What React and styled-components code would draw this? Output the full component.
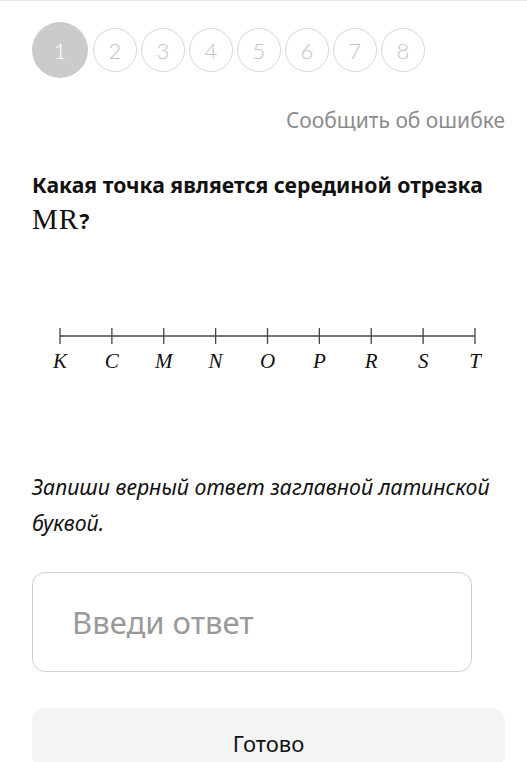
import styled, { createGlobalStyle } from "styled-components";

const GlobalStyle = createGlobalStyle`
	html, body {
		margin: 0;
		padding: 0;
		background: #ffffff;
	}

	body {
		font-family: "Noto Sans", "Open Sans", sans-serif;
		color: #111111;
	}
`;

const Page = styled.div`
	display: flex;
	flex-direction: column;
	width: 527px;
	min-height: 762px;
	box-sizing: border-box;
	border-top: 1px solid #e9e9e9;
	padding: 21px 22px 0 32px;
`;

const Steps = styled.div`
	display: flex;
	align-items: center;
	gap: 4px;
	height: 56px;
`;

const Step = styled.div`
	display: flex;
	align-items: center;
	justify-content: center;
	box-sizing: border-box;
	width: ${({ $active }) => ($active ? "56px" : "44px")};
	height: ${({ $active }) => ($active ? "56px" : "44px")};
	margin-right: ${({ $active }) => ($active ? "1px" : "0")};
	border-radius: 50%;
	border: ${({ $active }) => ($active ? "none" : "1.5px solid #d6d6d6")};
	background: ${({ $active }) => ($active ? "#cbcbcb" : "#ffffff")};
	color: ${({ $active }) => ($active ? "#ffffff" : "#c4c4c4")};
	font-family: "Lato", "Noto Sans", sans-serif;
	font-weight: 300;
	font-size: 22px;
`;

const ReportLink = styled.div`
	align-self: flex-end;
	margin-top: 27px;
	font-size: 21px;
	line-height: 30px;
	color: #8c8c8c;
`;

const Question = styled.h2`
	margin: 32px 0 0;
	font-size: 21.2px;
	font-weight: 700;
	line-height: 35px;
	color: #111111;
`;

const MathVar = styled.span`
	font-family: "Liberation Serif", "DejaVu Serif", serif;
	font-weight: 400;
	font-size: 29px;
	letter-spacing: 1px;
`;

const LineWrap = styled.div`
	display: flex;
	margin: 88px -22px 0 -32px;

	& > svg {
		flex-shrink: 0;
	}
`;

const Hint = styled.p`
	margin: 91px 0 0;
	font-size: 21.3px;
	font-style: italic;
	line-height: 36px;
	color: #111111;
`;

const AnswerField = styled.div`
	display: flex;
	align-items: center;
	box-sizing: border-box;
	width: 440px;
	height: 100px;
	margin-top: 31px;
	padding-left: 39px;
	border: 1px solid #cfcfcf;
	border-radius: 13px;
	font-size: 31px;
	color: #9a9a9a;
`;

const SubmitButton = styled.div`
	display: flex;
	justify-content: center;
	align-items: flex-start;
	box-sizing: border-box;
	height: 60px;
	margin-top: 36px;
	padding-top: 20px;
	border-radius: 13px;
	background: #f4f4f4;
	font-size: 22px;
	color: #111111;
`;

const POINTS = ["K", "C", "M", "N", "O", "P", "R", "S", "T"];

const NumberLine = () => {
	const start = 60;
	const end = 475;
	const step = (end - start) / (POINTS.length - 1);

	return (
		<svg width="527" height="52" viewBox="0 0 527 52">
			<line x1={start} y1="10" x2={end} y2="10" stroke="#444" strokeWidth="1.3" />
			{POINTS.map((label, i) => {
				const x = start + step * i;
				return (
					<g key={label}>
						<line x1={x} y1="2" x2={x} y2="18" stroke="#444" strokeWidth="1.3" />
						<text
							x={x}
							y="42"
							textAnchor="middle"
							fontFamily="Liberation Serif, DejaVu Serif, serif"
							fontStyle="italic"
							fontSize="21"
							fill="#111"
						>
							{label}
						</text>
					</g>
				);
			})}
		</svg>
	);
};

export default function App() {
	return (
		<>
			<GlobalStyle />
			<Page>
				<Steps>
					{[1, 2, 3, 4, 5, 6, 7, 8].map((n) => (
						<Step key={n} $active={n === 1}>
							{n}
						</Step>
					))}
				</Steps>

				<ReportLink>Сообщить об ошибке</ReportLink>

				<Question>
					Какая точка является серединой отрезка <MathVar>MR</MathVar>?
				</Question>

				<LineWrap>
					<NumberLine />
				</LineWrap>

				<Hint>Запиши верный ответ заглавной латинской буквой.</Hint>

				<AnswerField>Введи ответ</AnswerField>

				<SubmitButton>Готово</SubmitButton>
			</Page>
		</>
	);
}
